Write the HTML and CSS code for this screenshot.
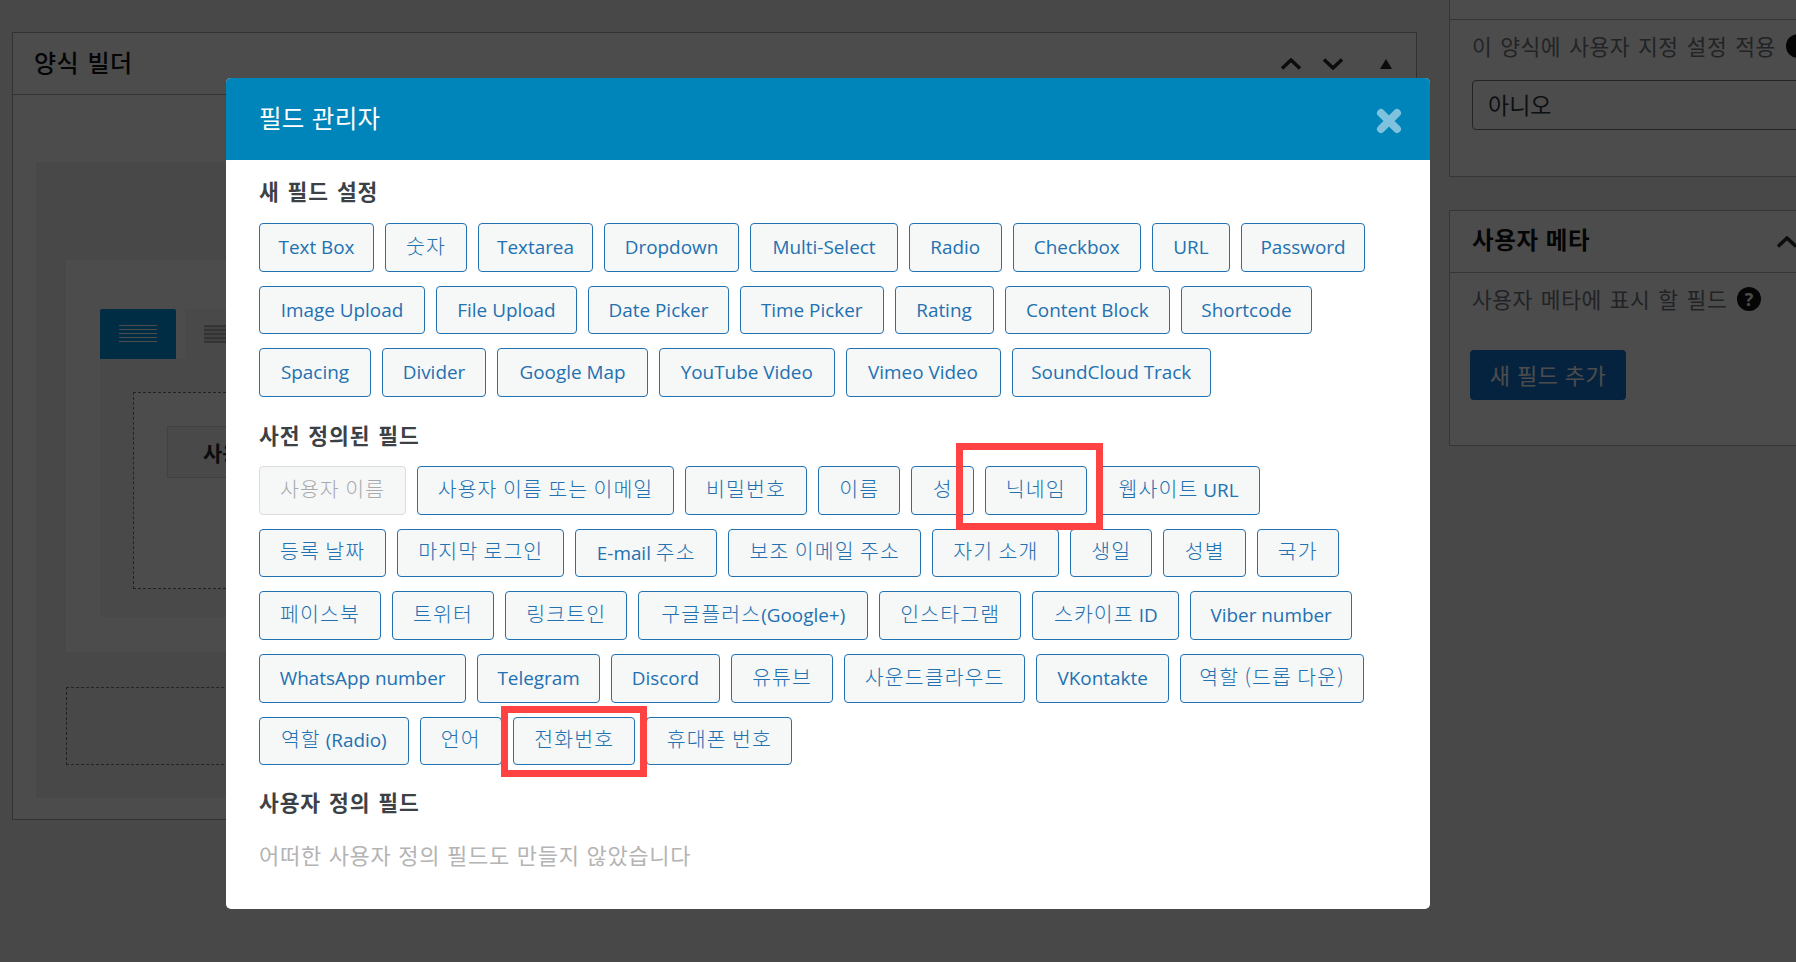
FILE: index.html
```html
<!DOCTYPE html>
<html lang="ko">
<head>
<meta charset="utf-8">
<title>필드 관리자</title>
<link rel="stylesheet" href="styles.css">
</head>
<body>
<div class="page">
  <main class="builder">
    <header class="builder-head">
      <h2 class="builder-title">양식 빌더</h2>
      <div class="head-actions">
        <svg class="chev" viewBox="0 0 22 12"><path d="M2 10.5 11 2l9 8.500"/></svg>
        <svg class="chev" viewBox="0 0 22 12"><path d="M2 1.500 11 10l9-8.500"/></svg>
        <svg class="tri" viewBox="0 0 12 10"><path d="M6 0l6 10H0z"/></svg>
      </div>
    </header>
    <div class="builder-body">
      <div class="canvas">
        <div class="row-box">
          <div class="tabs">
            <span class="tab tab-active"><i class="lines"></i></span>
            <span class="tab"><i class="lines lines-dark"></i></span>
          </div>
          <div class="tab-pane">
            <div class="drop-zone">
              <div class="field-stub">사용자 이름</div>
            </div>
          </div>
        </div>
        <div class="drop-empty"></div>
      </div>
    </div>
  </main>
  <aside class="side">
    <section class="side-panel side-first">
      <div class="side-line"></div>
      <div class="side-content">
        <p class="side-label nowrap">이 양식에 사용자 지정 설정 적용 <i class="help"></i></p>
        <div class="select">아니오</div>
      </div>
    </section>
    <section class="side-panel side-second">
      <header class="side-head">
        <h3>사용자 메타</h3>
        <svg class="chev chev-side" viewBox="0 0 22 12"><path d="M2 10.5 11 2l9 8.500"/></svg>
      </header>
      <div class="side-content">
        <p class="side-label">사용자 메타에 표시 할 필드 <i class="help">?</i></p>
        <span class="add-btn">새 필드 추가</span>
      </div>
    </section>
  </aside>
</div>

<div class="backdrop"></div>

<div class="modal">
  <header class="modal-head">
    <h1>필드 관리자</h1>
    <svg class="close" viewBox="0 0 26 26"><path d="M5 5l16 16M21 5 5 21"/></svg>
  </header>
  <div class="modal-body">
    <h4 class="group-title">새 필드 설정</h4>
    <div class="btn-wrap">
      <button class="fbtn f-textbox">Text Box</button>
      <button class="fbtn ko f-number">숫자</button>
      <button class="fbtn f-textarea">Textarea</button>
      <button class="fbtn f-dropdown">Dropdown</button>
      <button class="fbtn f-multi">Multi-Select</button>
      <button class="fbtn f-radio">Radio</button>
      <button class="fbtn f-checkbox">Checkbox</button>
      <button class="fbtn f-url">URL</button>
      <button class="fbtn f-password">Password</button>
      <button class="fbtn f-image">Image Upload</button>
      <button class="fbtn f-file">File Upload</button>
      <button class="fbtn f-date">Date Picker</button>
      <button class="fbtn f-time">Time Picker</button>
      <button class="fbtn f-rating">Rating</button>
      <button class="fbtn f-block">Content Block</button>
      <button class="fbtn f-shortcode">Shortcode</button>
      <button class="fbtn f-spacing">Spacing</button>
      <button class="fbtn f-divider">Divider</button>
      <button class="fbtn f-map">Google Map</button>
      <button class="fbtn f-youtube">YouTube Video</button>
      <button class="fbtn f-vimeo">Vimeo Video</button>
      <button class="fbtn f-soundcloud">SoundCloud Track</button>
    </div>
    <h4 class="group-title">사전 정의된 필드</h4>
    <div class="btn-wrap">
      <button class="fbtn ko off u-login">사용자 이름</button>
      <button class="fbtn ko u-login-email">사용자 이름 또는 이메일</button>
      <button class="fbtn ko u-password">비밀번호</button>
      <button class="fbtn ko u-first">이름</button>
      <button class="fbtn ko u-last">성</button>
      <button class="fbtn ko mark mark-nick u-nick">닉네임</button>
      <button class="fbtn mixed u-web"><span class="kr">웹사이트</span> URL</button>
      <button class="fbtn ko u-registered">등록 날짜</button>
      <button class="fbtn ko u-lastlogin">마지막 로그인</button>
      <button class="fbtn mixed u-email"><span>E-mail</span> <span class="kr">주소</span></button>
      <button class="fbtn ko u-email2">보조 이메일 주소</button>
      <button class="fbtn ko u-bio">자기 소개</button>
      <button class="fbtn ko u-birth">생일</button>
      <button class="fbtn ko u-gender">성별</button>
      <button class="fbtn ko u-country">국가</button>
      <button class="fbtn ko u-facebook">페이스북</button>
      <button class="fbtn ko u-twitter">트위터</button>
      <button class="fbtn ko u-linkedin">링크트인</button>
      <button class="fbtn mixed u-google"><span class="kr">구글플러스</span>(Google+)</button>
      <button class="fbtn ko u-instagram">인스타그램</button>
      <button class="fbtn mixed u-skype"><span class="kr">스카이프</span> ID</button>
      <button class="fbtn u-viber">Viber number</button>
      <button class="fbtn u-whatsapp">WhatsApp number</button>
      <button class="fbtn u-telegram">Telegram</button>
      <button class="fbtn u-discord">Discord</button>
      <button class="fbtn ko u-youtube">유튜브</button>
      <button class="fbtn ko u-soundcloud">사운드클라우드</button>
      <button class="fbtn u-vk">VKontakte</button>
      <button class="fbtn ko u-role-drop">역할 (드롭 다운)</button>
      <button class="fbtn mixed u-role-radio"><span class="kr">역할</span> (Radio)</button>
      <button class="fbtn ko u-lang">언어</button>
      <button class="fbtn ko mark mark-phone u-phone">전화번호</button>
      <button class="fbtn ko u-mobile">휴대폰 번호</button>
    </div>
    <h4 class="group-title group-custom">사용자 정의 필드</h4>
    <p class="empty-note">어떠한 사용자 정의 필드도 만들지 않았습니다</p>
  </div>
</div>
</body>
</html>
```
FILE: styles.css
```css
* { box-sizing: border-box; }
html, body { margin: 0; height: 100%; }
body {
  width: 1796px;
  height: 962px;
  overflow: hidden;
  position: relative;
  background: #f1f1f1;
  color: #23282d;
  font-family: "Open Sans", "Noto Sans CJK KR", sans-serif;
}
h1, h2, h3, h4, p { margin: 0; }

/* page under the backdrop */
.page { display: flex; height: 962px; padding-left: 12px; }

.builder {
  flex: none;
  width: 1405px;
  height: 788px;
  margin-top: 32px;
  background: #fff;
  border: 1px solid #a9a9a9;
  display: flex;
  flex-direction: column;
}
.builder-head {
  flex: none;
  height: 62px;
  display: flex;
  align-items: center;
  justify-content: space-between;
  padding: 0 24px 0 21px;
  border-bottom: 1px solid #a9a9a9;
}
.builder-title {
  font: 500 24px/1 "Noto Sans CJK KR", sans-serif;
  letter-spacing: .5px;
  word-spacing: 1px;
  color: #111;
  margin-top: -4px;
}
.head-actions { display: flex; align-items: center; gap: 20px; }
.chev { width: 22px; height: 12px; fill: none; stroke: #23282d; stroke-width: 3.500; }
.tri { width: 12px; height: 10px; margin-left: 16px; fill: #23282d; }

.builder-body { flex: 1; padding: 67px 0 21px 23px; }
.canvas {
  height: 100%;
  background: #f0f0f0;
  padding: 98px 0 0 30px;
}
.row-box {
  height: 392px;
  background: #fff;
  padding: 49px 0 0 34px;
}
.tabs { display: flex; gap: 9px; height: 50px; }
.tab {
  width: 76px;
  height: 50px;
  display: flex;
  align-items: center;
  justify-content: center;
  background: #f5f5f5;
}
.tab-active { background: #0096e3; border-radius: 2px 2px 0 0; }
.lines {
  display: block;
  width: 38px;
  height: 18px;
  background: repeating-linear-gradient(#fff 0 1px, transparent 1px 4px);
}
.lines-dark { background: repeating-linear-gradient(#b0b0b0 0 2px, #dedede 2px 4px); }
.tab-pane {
  height: 258px;
  background: #f5f5f5;
  padding: 33px 0 0 33px;
}
.drop-zone {
  height: 197px;
  background: #fff;
  border: 1px dashed #777;
  padding: 33px 0 0 33px;
}
.field-stub {
  width: 400px;
  height: 52px;
  padding-left: 35px;
  background: #f5f5f5;
  border: 1px solid #ddd;
  font: 700 21px/50px "Noto Sans CJK KR", sans-serif;
}
.drop-empty {
  height: 78px;
  margin-top: 35px;
  background: #f1f1f1;
  border: 1px dashed #777;
}

.side { flex: none; width: 400px; margin-left: 32px; }
.side-panel { background: #fff; border: solid #b4b4b4; border-width: 0 0 1px 1px; }
.side-first { height: 177px; }
.side-line { height: 20px; border-bottom: 1px solid #b4b4b4; }
.side-content { padding: 0 0 0 22px; }
.side-label {
  font: 400 21.500px/30px "Noto Sans CJK KR", sans-serif;
  letter-spacing: .5px;
  word-spacing: 1.500px;
  color: #72777c;
  display: flex;
  align-items: center;
  gap: 4px;
}
.nowrap { white-space: nowrap; }
.side-first .side-label { margin-top: 11px; }
.help {
  flex: none;
  width: 24px;
  height: 24px;
  margin-left: 6px;
  border-radius: 50%;
  background: #111;
  color: #fff;
  font: 700 18px/24px "Open Sans", sans-serif;
  text-align: center;
}
.select {
  width: 400px;
  height: 50px;
  margin-top: 19px;
  padding-left: 15px;
  border: 1px solid #72777c;
  border-radius: 4px;
  background: #fff;
  font: 400 23px/47px "Noto Sans CJK KR", sans-serif;
  color: #32373c;
}
.side-second { margin-top: 33px; height: 236px; border-top-width: 1px; }
.side-head {
  height: 62px;
  display: flex;
  align-items: center;
  justify-content: space-between;
  padding-left: 22px;
  border-bottom: 1px solid #b4b4b4;
}
.side-head h3 {
  font: 700 23.500px/1 "Noto Sans CJK KR", sans-serif;
  letter-spacing: .6px;
  color: #111;
  margin-top: -4px;
}
.chev-side { margin-right: 51px; }
.side-second .side-label { margin-top: 11px; }
.add-btn {
  display: block;
  width: 156px;
  height: 50px;
  margin: 36px 0 0 -2px;
  border-radius: 4px;
  background: #1175d2;
  color: #fff;
  text-align: center;
  font: 400 22px/49px "Noto Sans CJK KR", sans-serif;
  letter-spacing: .4px;
}

.backdrop { position: absolute; inset: 0; background: rgba(0, 0, 0, .7); }

/* modal */
.modal {
  position: absolute;
  left: 226px;
  top: 78px;
  width: 1204px;
  height: 831px;
  background: #fff;
  border-radius: 5px;
  overflow: hidden;
}
.modal-head {
  height: 82px;
  background: #0085ba;
  display: flex;
  align-items: center;
  justify-content: space-between;
  padding: 0 28px 0 33px;
}
.modal-head h1 {
  font: 400 24.500px/1 "Noto Sans CJK KR", sans-serif;
  letter-spacing: .3px;
  color: #fff;
  margin-top: -2px;
}
.close {
  width: 26px;
  height: 26px;
  margin-top: 4px;
  fill: none;
  stroke: #7fc2de;
  stroke-width: 8px;
  stroke-linecap: round;
}
.modal-body { padding: 18px 33px 0; }
.group-title {
  font: 700 21.500px/26px "Noto Sans CJK KR", sans-serif;
  letter-spacing: .9px;
  word-spacing: 1px;
  color: #3c4146;
  margin: 25px 0 18px;
}
.group-title:first-child { margin-top: 0; margin-bottom: 19px; }
.group-title.group-custom { margin-top: 24px; }
.btn-wrap { display: flex; flex-wrap: wrap; gap: 14px 11px; }

.fbtn {
  position: relative;
  height: 48.670px;
  padding: 0;
  background: #f6f7f7;
  border: 1px solid #2271b1;
  border-radius: 4px;
  color: #2271b1;
  font: 400 18.900px/1 "Open Sans", "Noto Sans CJK KR", sans-serif;
  white-space: nowrap;
}
.fbtn.ko, .kr {
  font-family: "Noto Sans CJK KR", sans-serif;
  font-size: 20.500px;
  font-weight: 300;
  letter-spacing: 1.100px;
  word-spacing: -1.500px;
}
.fbtn.ko { padding-bottom: 5px; }
.fbtn.mixed { padding-bottom: 3px; }
.fbtn.off { background: #f6f7f7; border-color: #dcdcde; color: #a7aaad; }

/* button widths: custom fields */
.f-textbox { width: 115px; }
.f-number { width: 82px; }
.f-textarea { width: 115px; }
.f-dropdown { width: 135px; }
.f-multi { width: 148px; }
.f-radio { width: 92.500px; }
.f-checkbox { width: 128.500px; }
.f-url { width: 78px; }
.f-password { width: 124px; }
.f-image { width: 166px; }
.f-file { width: 141px; }
.f-date { width: 141px; }
.f-time { width: 143.500px; }
.f-rating { width: 99px; }
.f-block { width: 165.500px; }
.f-shortcode { width: 131px; }
.f-spacing { width: 112px; }
.f-divider { width: 104px; }
.f-map { width: 151px; }
.f-youtube { width: 175.500px; }
.f-vimeo { width: 155px; }
.f-soundcloud { width: 199.500px; }

/* button widths: predefined fields */
.u-login { width: 147px; }
.u-login-email { width: 257px; }
.u-password { width: 122px; }
.u-first { width: 82.400px; }
.u-last { width: 62.600px; }
.u-nick { width: 101.600px; }
.u-web { width: 162px; }
.u-registered { width: 127.300px; }
.u-lastlogin { width: 167px; }
.u-email { width: 142px; }
.u-email2 { width: 192.900px; }
.u-bio { width: 127.200px; }
.u-birth { width: 81.900px; }
.u-gender { width: 82.800px; }
.u-country { width: 81.500px; }
.u-facebook { width: 122px; }
.u-twitter { width: 102px; }
.u-linkedin { width: 122.400px; }
.u-google { width: 229.800px; }
.u-instagram { width: 142.100px; }
.u-skype { width: 147.100px; }
.u-viber { width: 161.500px; }
.u-whatsapp { width: 207.200px; }
.u-telegram { width: 122.800px; }
.u-discord { width: 108.800px; }
.u-youtube { width: 102.600px; }
.u-soundcloud { width: 180.600px; }
.u-vk { width: 133.400px; }
.u-role-drop { width: 183.300px; }
.u-role-radio { width: 149.600px; }
.u-lang { width: 82.400px; }
.u-phone { width: 122.400px; }
.u-mobile { width: 145.900px; }

.mark { z-index: 1; }
.mark::after {
  content: "";
  position: absolute;
  border: 7px solid #ff4343;
  pointer-events: none;
}
.mark-nick::after { left: -30px; right: -17px; top: -24px; bottom: -16px; }
.mark-phone::after { left: -13px; right: -13px; top: -12px; bottom: -13px; }

.empty-note {
  margin-top: 24px;
  font: 400 22px/30px "Noto Sans CJK KR", sans-serif;
  letter-spacing: .7px;
  word-spacing: 0;
  color: #b4b4b4;
}
```
